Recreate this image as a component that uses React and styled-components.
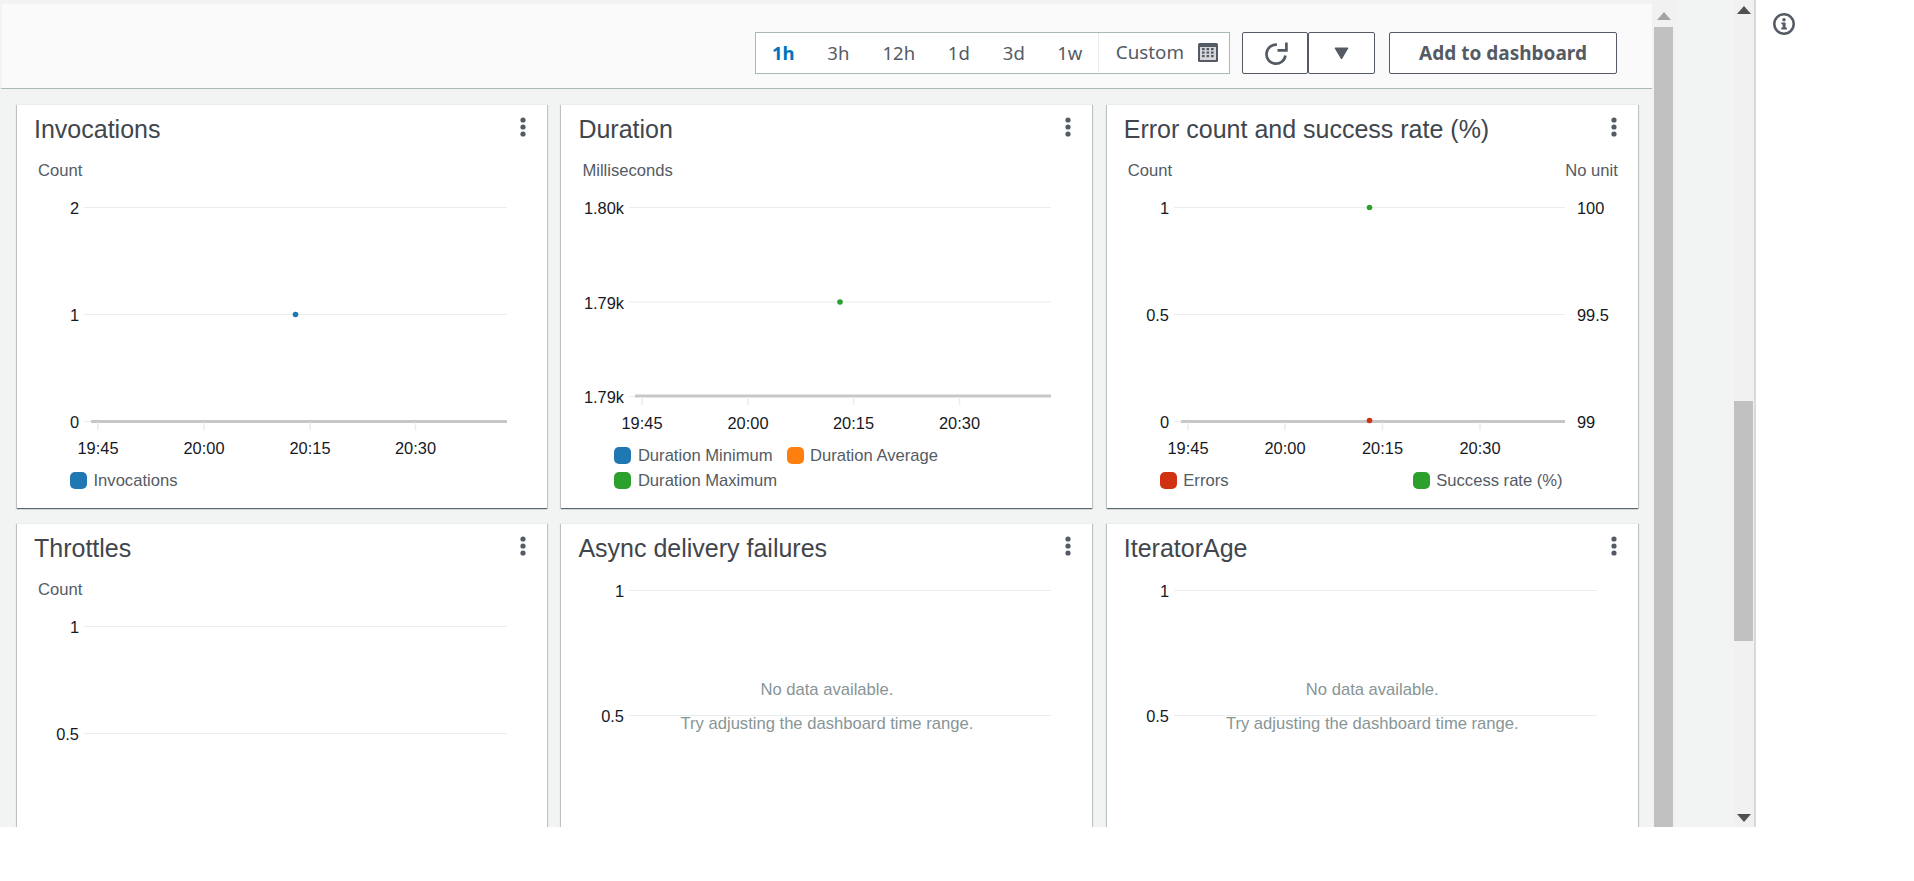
import React from 'react'
import styled, { createGlobalStyle } from 'styled-components'

const GlobalStyle = createGlobalStyle`
    html, body {
        margin: 0;
        background: #fff;
    }
`

const Page = styled.div`
    display: flex;
    height: 827px;
    overflow: hidden;
    font-family: "Liberation Sans", Arial, sans-serif;
    color: #16191f;
`

const Main = styled.div`
    width: 1652px;
    flex: none;
    padding-top: 4px;
    background: #f2f3f3;
    box-sizing: border-box;
`

const Toolbar = styled.div`
    display: flex;
    align-items: flex-start;
    justify-content: flex-end;
    height: 85px;
    padding: 28px 35px 0 0;
    box-sizing: border-box;
    background: #fafafa;
    border-bottom: 1px solid #aab7b8;
    border-left: 2px solid #f2f3f3;
    font-family: "Noto Sans", sans-serif;
`

const RangePicker = styled.div`
    display: flex;
    align-items: center;
    height: 42px;
    box-sizing: border-box;
    padding: 0 11px 2px 0;
    margin-right: 12px;
    background: #fff;
    border: 1px solid #aab7b8;
`

const RangeItem = styled.span`
    width: ${p => p.$width}px;
    text-align: center;
    font-size: 18.5px;
    color: ${p => (p.$active ? '#0073bb' : '#545b64')};
    font-weight: ${p => (p.$active ? 700 : 400)};
`

const CustomRange = styled.span`
    display: flex;
    align-items: center;
    gap: 14px;
    height: 38px;
    padding-left: 17px;
    border-left: 1px solid #eaeded;
    font-size: 18.8px;
    color: #545b64;
`

const Button = styled.button`
    display: flex;
    align-items: center;
    justify-content: center;
    width: ${p => p.$width}px;
    height: 42px;
    padding: 0;
    background: #fff;
    border: 1px solid #545b64;
    border-radius: 2px;
    margin-left: ${p => p.$gap || 0}px;
    font-family: inherit;
    font-size: 19px;
    font-weight: 700;
    color: #545b64;
`

const Grid = styled.div`
    display: grid;
    grid-template-columns: 530px 531px 531px;
    grid-auto-rows: 404px;
    column-gap: 14.4px;
    row-gap: 15px;
    padding: 15px 0 0 17px;
`

const Card = styled.section`
    position: relative;
    display: flex;
    flex-direction: column;
    background: #fff;
    box-shadow: 0 1px 1px 0 rgba(0, 28, 36, 0.5), 1px 1px 1px 0 rgba(0, 28, 36, 0.15), -1px 1px 1px 0 rgba(0, 28, 36, 0.15);
    border-top: 1px solid #eaeded;
    box-sizing: border-box;
`

const CardHead = styled.div`
    display: flex;
    justify-content: space-between;
    height: 37px;
    padding: 10px 21px 0 17px;
    box-sizing: border-box;
`

const CardTitle = styled.h2`
    margin: 0;
    font-size: 25px;
    line-height: 28px;
    font-weight: 400;
    color: #41464d;
`

const Kebab = styled.svg`
    width: 6px;
    height: 20px;
    margin-top: 2px;
`

const Units = styled.div`
    display: flex;
    justify-content: space-between;
    height: 19px;
    margin-top: 19px;
    padding: 0 20px 0 21px;
    font-size: 16.6px;
    line-height: 20px;
    color: #545b64;
`

const ChartSvg = styled.svg`
    display: block;
    flex: none;
    font-size: 16.4px;
    fill: #16191f;
`

const Legend = styled.div`
    display: ${p => (p.$split ? 'grid' : 'flex')};
    grid-template-columns: 239px auto;
    flex-wrap: wrap;
    column-gap: 14px;
    margin-top: auto;
    padding: 0 0 15px 53px;
    font-size: 16.6px;
    color: #545b64;
`

const LegendItem = styled.div`
    display: flex;
    align-items: center;
    gap: 6.5px;
    height: 25px;
`

const Swatch = styled.span`
    width: 17px;
    height: 17px;
    border-radius: 5px;
    background: ${p => p.$color};
`

const NoData = styled.div`
    position: absolute;
    left: 0;
    right: 0;
    top: 149px;
    text-align: center;
    font-size: 16.6px;
    line-height: 34px;
    color: #879596;
`

const ScrollTrack = styled.div`
    position: relative;
    flex: none;
    width: ${p => p.$width}px;
    background: #f1f1f1;
`

const ScrollThumb = styled.div`
    position: absolute;
    left: ${p => p.$left}px;
    top: ${p => p.$top}px;
    width: 19px;
    height: ${p => p.$height}px;
    background: #c1c1c1;
`

const ScrollArrow = styled.svg`
    position: absolute;
    left: ${p => p.$left}px;
    top: ${p => p.$top}px;
    width: 14px;
    height: 8px;
    fill: ${p => p.$color};
`

const Gutter = styled.div`
    flex: none;
    width: 58px;
    background: #f2f3f3;
`

const SidePanel = styled.aside`
    flex: 1;
    padding: 13px 0 0 17px;
    border-left: 2px solid #d5dbdb;
`

const GRID = '#eaeded'
const AXIS = '#c7c7c7'
const BLUE = '#1f77b4'
const ORANGE = '#ff7f0e'
const GREEN = '#2ca02c'
const RED = '#d13212'

const charts = [
    {
        title: 'Invocations',
        left: 'Count',
        height: 285,
        end: 490,
        labelX: 62,
        rows: [[27, '2'], [134, '1'], [241, '0']],
        ticks: [81, 187, 293, 398.5],
        tickY: 268,
        axisY: 241.5,
        dots: [[278.5, 134.5, BLUE]],
        legend: [['Invocations', BLUE]],
    },
    {
        title: 'Duration',
        left: 'Milliseconds',
        height: 260,
        end: 490,
        labelX: 63,
        rows: [[27, '1.80k'], [121.5, '1.79k'], [216, '1.79k']],
        ticks: [81, 187, 292.5, 398.5],
        tickY: 243,
        axisY: 216,
        dots: [[279, 122, GREEN]],
        legend: [['Duration Minimum', BLUE], ['Duration Average', ORANGE], ['Duration Maximum', GREEN]],
    },
    {
        title: 'Error count and success rate (%)',
        left: 'Count',
        right: 'No unit',
        height: 285,
        end: 458,
        labelX: 62,
        rightLabels: ['100', '99.5', '99'],
        rows: [[27, '1'], [134, '0.5'], [241, '0']],
        ticks: [81, 178, 275.5, 373],
        tickY: 268,
        axisY: 241.5,
        dots: [[262.5, 27.5, GREEN], [262.5, 240.5, RED]],
        legend: [['Errors', RED], ['Success rate (%)', GREEN]],
        split: true,
    },
    {
        title: 'Throttles',
        left: 'Count',
        height: 240,
        end: 490,
        labelX: 62,
        rows: [[27, '1'], [134, '0.5']],
    },
    {
        title: 'Async delivery failures',
        height: 240,
        end: 490,
        labelX: 63,
        rows: [[29, '1'], [154, '0.5']],
        empty: true,
    },
    {
        title: 'IteratorAge',
        height: 240,
        end: 490,
        labelX: 62,
        rows: [[29, '1'], [154, '0.5']],
        empty: true,
    },
]

const Chart = ({ chart }) => {
    const { height, end, labelX, rows, ticks, tickY, axisY, dots, rightLabels } = chart
    return (
        <ChartSvg width="531" height={height}>
            {rows.map(([y, label], i) => (
                <g key={i}>
                    <line x1={labelX + 5} x2={end} y1={y + 0.5} y2={y + 0.5} stroke={GRID} strokeWidth="1" />
                    <text x={labelX} y={y + 7} textAnchor="end">{label}</text>
                    {rightLabels && <text x={470} y={y + 7}>{rightLabels[i]}</text>}
                </g>
            ))}
            {ticks && (
                <>
                    <line x1={74} x2={end} y1={axisY} y2={axisY} stroke={AXIS} strokeWidth="3" />
                    {ticks.map(x => (
                        <line key={x} x1={x} x2={x} y1={axisY + 1} y2={axisY + 9} stroke={GRID} strokeWidth="1.5" />
                    ))}
                    {ticks.map((x, i) => (
                        <text key={i} x={x} y={tickY + 6} textAnchor="middle">
                            {['19:45', '20:00', '20:15', '20:30'][i]}
                        </text>
                    ))}
                </>
            )}
            {dots && dots.map(([x, y, color]) => <circle key={y} cx={x} cy={y} r="2.8" fill={color} />)}
        </ChartSvg>
    )
}

const DashboardCard = ({ chart }) => (
    <Card>
        <CardHead>
            <CardTitle>{chart.title}</CardTitle>
            <Kebab viewBox="0 0 6 20" fill="#545b64">
                <circle cx="3" cy="3" r="2.6" />
                <circle cx="3" cy="10" r="2.6" />
                <circle cx="3" cy="17" r="2.6" />
            </Kebab>
        </CardHead>
        {chart.left && (
            <Units>
                <span>{chart.left}</span>
                {chart.right && <span>{chart.right}</span>}
            </Units>
        )}
        <Chart chart={chart} />
        {chart.empty && (
            <NoData>
                No data available.
                <br />
                Try adjusting the dashboard time range.
            </NoData>
        )}
        {chart.legend && (
            <Legend $split={chart.split}>
                {chart.legend.map(([label, color]) => (
                    <LegendItem key={label}>
                        <Swatch $color={color} />
                        {label}
                    </LegendItem>
                ))}
            </Legend>
        )}
    </Card>
)

const CalendarIcon = () => (
    <svg width="20" height="19" viewBox="0 0 20 19">
        <rect x="0" y="0" width="20" height="19" rx="1.5" fill="#545b64" />
        <rect x="2" y="4" width="16" height="13" fill="#d5d7da" />
        {[5, 8.5, 12].map(y => [4, 8.5, 13].map(x => (
            <rect key={`${x}-${y}`} x={x} y={y} width="2.6" height="2.2" fill="#545b64" />
        )))}
    </svg>
)

const RefreshIcon = () => (
    <svg width="26" height="26" viewBox="0 0 26 26" fill="none" stroke="#545b64" strokeWidth="2.7">
        <path d="M15 4.75 A9.5 9.5 0 1 0 23.4 15.5" />
        <path d="M24.4 2.5 V 10.4 H 15.5" />
    </svg>
)

const CaretIcon = () => (
    <svg width="15" height="13" viewBox="0 0 15 13">
        <path d="M1 1 H14 L7.5 12 Z" fill="#545b64" stroke="#545b64" strokeWidth="1" strokeLinejoin="round" />
    </svg>
)

const InfoIcon = () => (
    <svg width="22" height="22" viewBox="0 0 22 22">
        <circle cx="11" cy="11" r="9.7" fill="none" stroke="#545b64" strokeWidth="2.5" />
        <circle cx="11" cy="6.8" r="1.7" fill="#545b64" />
        <path d="M8.3 9.4 H12.6 V14.4 H13.9 V16.4 H8.3 V14.4 H9.6 V11.2 H8.3 Z" fill="#545b64" />
    </svg>
)

const App = () => (
    <>
        <GlobalStyle />
        <Page>
            <Main>
                <Toolbar>
                    <RangePicker>
                        <RangeItem $active $width={55}>1h</RangeItem>
                        <RangeItem $width={55}>3h</RangeItem>
                        <RangeItem $width={66}>12h</RangeItem>
                        <RangeItem $width={54}>1d</RangeItem>
                        <RangeItem $width={56}>3d</RangeItem>
                        <RangeItem $width={56}>1w</RangeItem>
                        <CustomRange>
                            Custom
                            <CalendarIcon />
                        </CustomRange>
                    </RangePicker>
                    <Button $width={66}><RefreshIcon /></Button>
                    <Button $width={67}><CaretIcon /></Button>
                    <Button $width={228} $gap={14}>Add to dashboard</Button>
                </Toolbar>
                <Grid>
                    {charts.map(chart => <DashboardCard key={chart.title} chart={chart} />)}
                </Grid>
            </Main>
            <ScrollTrack $width={24}>
                <ScrollArrow $left={5} $top={12} $color="#a3a3a3" viewBox="0 0 14 8"><path d="M7 0 L14 8 H0 Z" /></ScrollArrow>
                <ScrollThumb $left={2} $top={27} $height={800} />
            </ScrollTrack>
            <Gutter />
            <ScrollTrack $width={20}>
                <ScrollArrow $left={3} $top={6} $color="#505050" viewBox="0 0 14 8"><path d="M7 0 L14 8 H0 Z" /></ScrollArrow>
                <ScrollThumb $left={0} $top={401} $height={240} />
                <ScrollArrow $left={3} $top={814} $color="#505050" viewBox="0 0 14 8"><path d="M0 0 H14 L7 8 Z" /></ScrollArrow>
            </ScrollTrack>
            <SidePanel><InfoIcon /></SidePanel>
        </Page>
    </>
)

export default App
